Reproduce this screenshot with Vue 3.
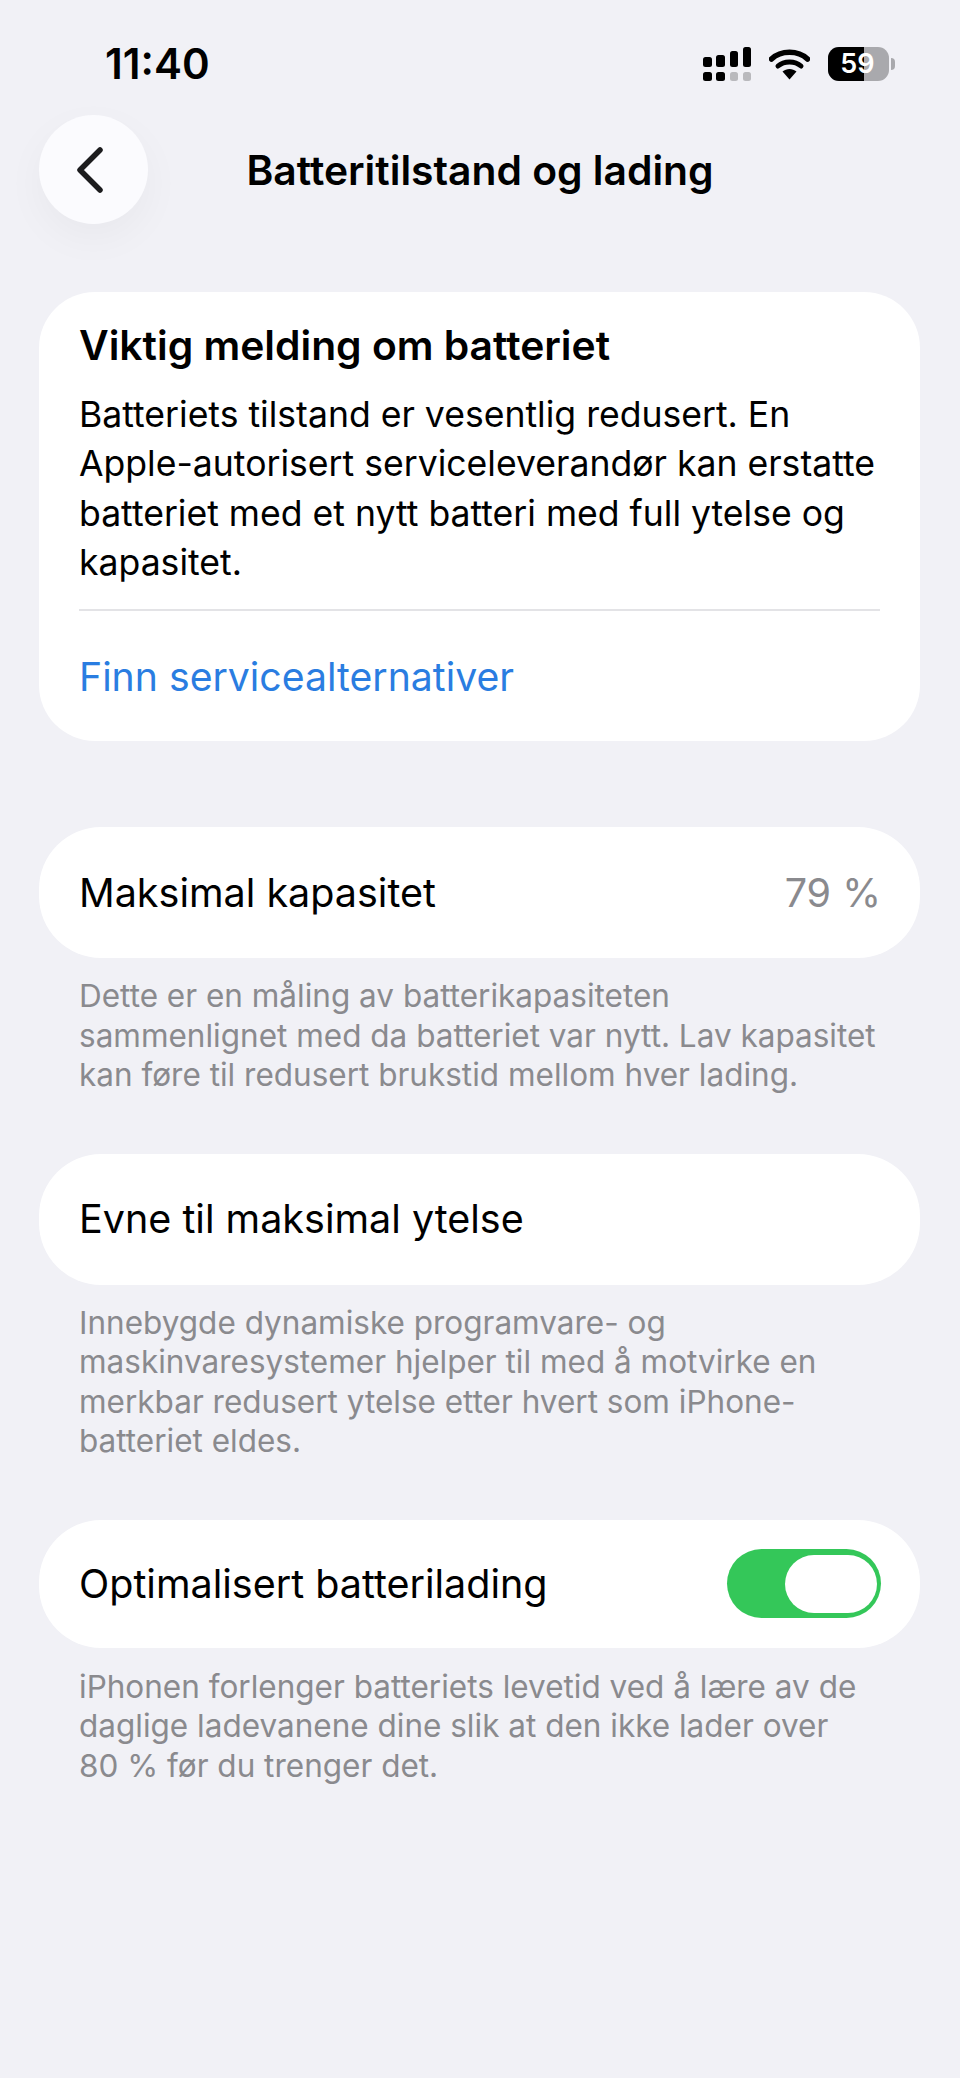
<script setup>
const sections = [
  {
    label: 'Maksimal kapasitet',
    value: '79 %',
    note: 'Dette er en måling av batterikapasiteten\nsammenlignet med da batteriet var nytt. Lav kapasitet\nkan føre til redusert brukstid mellom hver lading.',
  },
  {
    label: 'Evne til maksimal ytelse',
    note: 'Innebygde dynamiske programvare- og\nmaskinvaresystemer hjelper til med å motvirke en\nmerkbar redusert ytelse etter hvert som iPhone-\nbatteriet eldes.',
  },
  {
    label: 'Optimalisert batterilading',
    toggle: true,
    note: 'iPhonen forlenger batteriets levetid ved å lære av de\ndaglige ladevanene dine slik at den ikke lader over\n80 % før du trenger det.',
  },
];
</script>

<template>
  <div class="screen">
    <div class="status">
      <span class="time">11:40</span>
      <div class="status-icons">
        <svg width="48" height="34" viewBox="0 0 48 34">
          <rect x="0" y="10" width="9" height="10" rx="2.5" fill="#000" />
          <rect x="13" y="8" width="9" height="12" rx="2.5" fill="#000" />
          <rect x="27" y="4" width="8" height="16" rx="2.5" fill="#000" />
          <rect x="40" y="0" width="8" height="20" rx="2.5" fill="#000" />
          <rect x="0" y="25" width="9" height="9" rx="2.5" fill="#000" />
          <rect x="13" y="25" width="9" height="9" rx="2.5" fill="#000" />
          <rect x="27" y="25" width="8" height="9" rx="2.5" fill="#b9b9bd" />
          <rect x="40" y="25" width="8" height="9" rx="2.5" fill="#b9b9bd" />
        </svg>
        <svg class="wifi" width="41" height="32" viewBox="0 0 41 32">
          <path d="M2.5 11 C12 2 29 2 38.5 11" fill="none" stroke="#000" stroke-width="5.5" stroke-linecap="round" />
          <path d="M9 18 C15 12.5 26 12.5 32 18" fill="none" stroke="#000" stroke-width="5" stroke-linecap="round" />
          <path d="M13.5 23.5 C17.5 20 23.5 20 27.5 23.5 L20.5 31.5 Z" fill="#000" />
        </svg>
        <div class="battery">
          <div class="battery-body">
            <div class="battery-fill"></div>
            <span class="battery-num">59</span>
          </div>
          <div class="battery-cap"></div>
        </div>
      </div>
    </div>

    <div class="nav">
      <button class="back">
        <svg width="34" height="50" viewBox="0 0 34 50">
          <path d="M27 5 L7 25 L27 45" fill="none" stroke="#1c1c1e" stroke-width="5.5" stroke-linecap="round" stroke-linejoin="round" />
        </svg>
      </button>
      <h1 class="title">Batteritilstand og lading</h1>
    </div>

    <div class="content">
      <section class="card notice">
        <h2>Viktig melding om batteriet</h2>
        <p>Batteriets tilstand er vesentlig redusert. En<br />Apple-autorisert serviceleverandør kan erstatte<br />batteriet med et nytt batteri med full ytelse og<br />kapasitet.</p>
        <div class="divider"></div>
        <a class="link">Finn servicealternativer</a>
      </section>

      <div v-for="s in sections" :key="s.label" class="group">
        <div class="card row" :class="{ compact: s.toggle }">
          <span>{{ s.label }}</span>
          <span v-if="s.value" class="value">{{ s.value }}</span>
          <div v-if="s.toggle" class="toggle"><div class="knob"></div></div>
        </div>
        <p class="note">{{ s.note }}</p>
      </div>
    </div>
  </div>
</template>

<style>
body {
  background: #f1f1f6;
}
</style>

<style scoped>
.screen {
  width: 960px;
  height: 2078px;
  background: #f1f1f6;
  font-family: Inter, "Liberation Sans", sans-serif;
  color: #000;
  overflow: hidden;
}

.status {
  height: 115px;
  display: flex;
  justify-content: space-between;
  align-items: flex-start;
  padding: 40px 65px 0 105px;
  box-sizing: border-box;
}

.time {
  font-size: 42px;
  font-weight: 600;
  line-height: 48px;
}

.status-icons {
  display: flex;
  align-items: center;
  gap: 18px;
  padding-top: 7px;
}

.battery {
  display: flex;
  align-items: center;
  gap: 2px;
}

.battery-body {
  position: relative;
  width: 61px;
  height: 34px;
  border-radius: 11px;
  background: #a9a9ad;
  overflow: hidden;
}

.battery-fill {
  width: 36px;
  height: 100%;
  background: #000;
}

.battery-num {
  position: absolute;
  inset: 0;
  padding-right: 2px;
  text-align: center;
  color: #fff;
  font-size: 27px;
  font-weight: 600;
  line-height: 34px;
}

.battery-cap {
  width: 4px;
  height: 12px;
  border-radius: 0 4px 4px 0;
  background: #a9a9ad;
}

.nav {
  position: relative;
  height: 109px;
  display: flex;
  align-items: center;
  justify-content: center;
}

.back {
  position: absolute;
  left: 39px;
  top: 0;
  width: 109px;
  height: 109px;
  border: none;
  border-radius: 50%;
  background: #fbfbfe;
  box-shadow: 0 14px 40px rgba(0, 0, 0, 0.04);
  display: flex;
  align-items: center;
  justify-content: center;
  padding: 0 8px 0 0;
}

.title {
  margin: 0;
  font-size: 40.8px;
  font-weight: 600;
}

.content {
  padding: 68px 40px 0 39px;
}

.card {
  background: #fff;
  border-radius: 56px;
}

.notice {
  height: 449px;
  box-sizing: border-box;
  padding: 28px 40px 0;
  margin-bottom: 86px;
}

.notice h2 {
  margin: 0 0 20px;
  font-size: 40.8px;
  font-weight: 600;
  line-height: 50px;
}

.notice p {
  margin: 0;
  font-size: 35.6px;
  line-height: 49.3px;
}

.divider {
  height: 2px;
  background: #e3e3e6;
  margin: 22px 0 0;
}

.link {
  display: block;
  margin-top: 41px;
  font-size: 39.2px;
  line-height: 50px;
  color: #2a7de1;
}

.group {
  margin-bottom: 59px;
}

.row {
  height: 131px;
  padding: 0 39px 0 40px;
  display: flex;
  align-items: center;
  justify-content: space-between;
  font-size: 39.5px;
  border-radius: 62px;
}

.row.compact {
  height: 128px;
}

.value {
  color: #8a8a8e;
}

.toggle {
  width: 154px;
  height: 69px;
  border-radius: 35px;
  background: #34c759;
  padding: 5.5px 4px;
  box-sizing: border-box;
  display: flex;
  justify-content: flex-end;
}

.knob {
  width: 92px;
  height: 58px;
  border-radius: 29px;
  background: #fff;
}

.note {
  margin: 18px 0 0;
  padding: 0 40px;
  font-size: 31.5px;
  line-height: 39.5px;
  color: #8a8a8e;
  white-space: pre-line;
}

.compact + .note {
  margin-top: 19px;
}
</style>
